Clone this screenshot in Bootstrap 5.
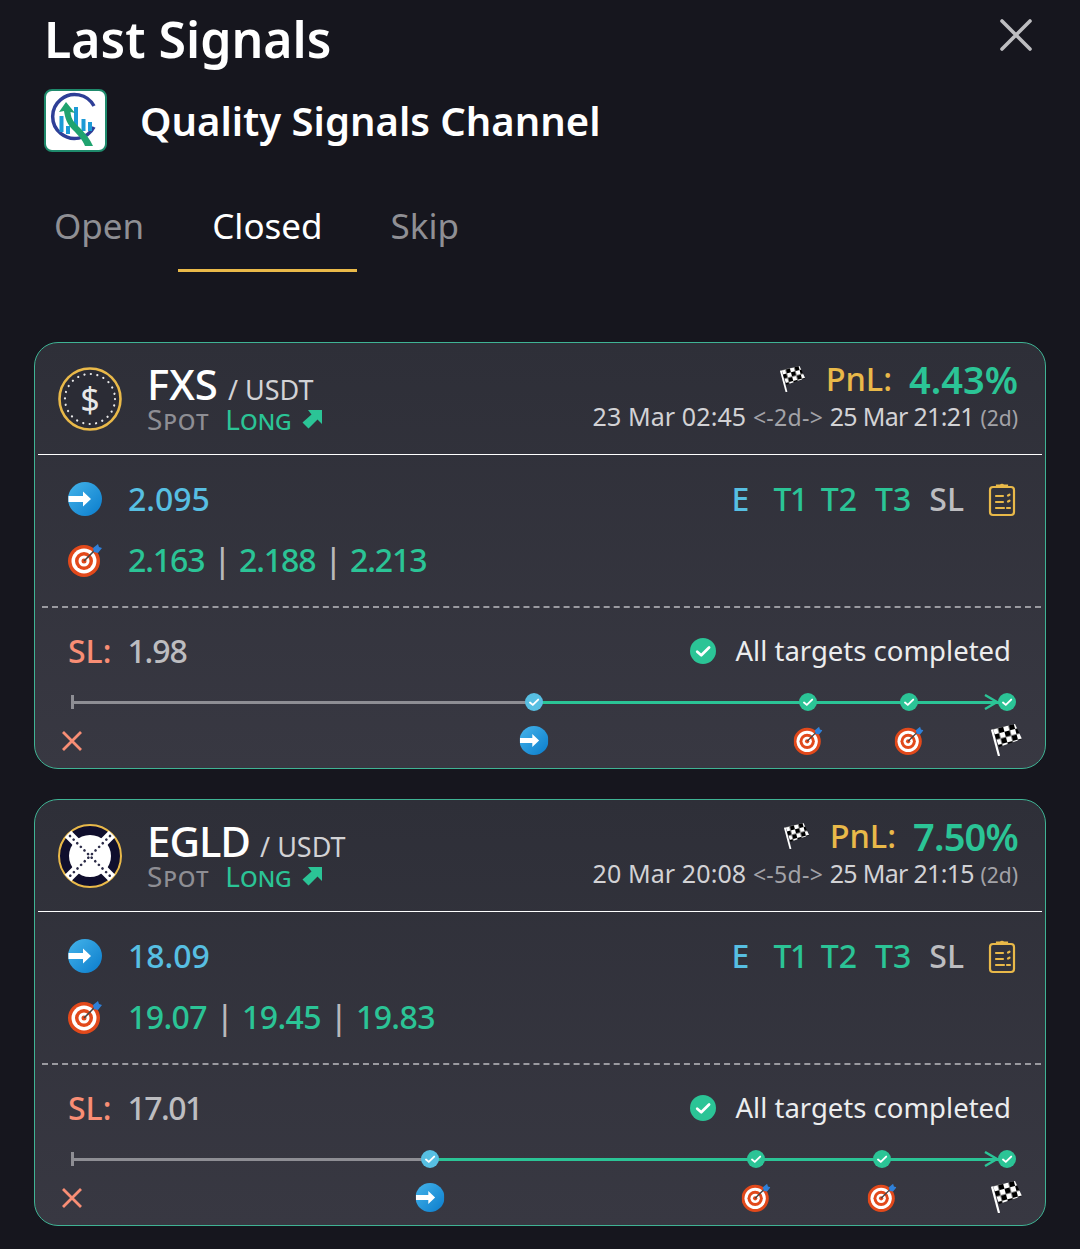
<!DOCTYPE html>
<html lang="en">
<head>
<meta charset="utf-8">
<title>Last Signals</title>
<link href="https://cdn.jsdelivr.net/npm/bootstrap@5.3.0/dist/css/bootstrap.min.css" rel="stylesheet">
<style>
html,body{height:1249px;overflow:hidden}
body{background:#16161e;font-family:"Noto Sans","Liberation Sans",sans-serif;color:#fff}
.pg-head{height:70px;padding:5px 47px 0 44px}
.pg-title{font-size:50px;font-weight:600;line-height:70px;margin:-1px 0 0;height:65px}
.close-x{width:34px;height:34px;margin-top:13px;background:none;border:0;padding:0}
.chan{height:78px;padding-left:44px;gap:33px;margin-top:11px}
.chan-name{font-size:40px;font-weight:600;margin:2px 0 0}
.logo-sq{width:63px;height:63px}
.tabs{padding-left:20px;height:183px;align-items:flex-start;padding-top:36px}
.tabs .nav-link{font-size:35px;line-height:48px;color:#8f8f94;padding:7px 34px 16px;height:77px;border-bottom:3px solid transparent;background:none}
.tabs .nav-link.active{color:#fff;border-bottom-color:#e9b949}
.sig-card{margin:0 34px 30px;height:427px;border:1px solid #3fb394;border-radius:24px;background:linear-gradient(180deg,#2e2f38 0%,#383842 100%);overflow:hidden;--bs-card-bg:transparent}
.sig-head{height:112px;flex:none;margin:0 3px;padding:0 24px 0 20px;border-bottom:1px solid #fff;gap:26px}
.coin{width:64px;height:64px;flex:none}
.coin-sign{font-size:34px;color:#e8e8e8;line-height:1}
.pair-col{margin-top:-3px;margin-left:-1px}
.pair-main{font-size:42px;font-weight:500;line-height:46px;height:44px;white-space:nowrap;gap:10px}
.pair-tight{letter-spacing:-1px}
.pair-quote{font-size:27px;font-weight:400;color:#d2d2d5}
.kind{font-size:28px;font-variant:small-caps;line-height:29px;white-space:nowrap}
.kind-spot{color:#8e8e94;letter-spacing:.8px;margin-right:16px}
.kind-up{margin-left:10px}
.col-green{color:#2bc496}
.col-blue{color:#57bfe2}
.col-gold{color:#e9b949}
.col-salmon{color:#f98e75}
.col-grey{color:#bdbdc0}
.pnl-col{margin-top:-7px}
.pnl-line{height:44px;gap:20px;white-space:nowrap}
.pnl-lab{font-size:32.500px;font-weight:500;line-height:44px}
.pnl-val{font-size:38px;font-weight:600;line-height:44px;margin-left:-3px}
.pnl-narrow{letter-spacing:-.8px}
.dates{font-size:25px;line-height:30px;color:#d2d2d5;white-space:nowrap;letter-spacing:.1px}
.date-gap{font-size:23px;color:#a3a3a8;letter-spacing:.3px}
.date-dur{font-size:21px;color:#a3a3a8;letter-spacing:0}
.date-end{letter-spacing:-.7px}
.flag-sm{width:26px;height:26px}
.sig-body{height:153px;flex:none;border-bottom:2px dashed #9a9aa0;margin:0 4px 0 7px;padding:13px 25px 0 26px}
.line-row{height:61px;gap:26px;font-size:32px;font-weight:500}
.ico-lg{width:34px;height:34px;flex:none}
.tight{letter-spacing:-1.100px}
.tight-b{letter-spacing:-.6px}
.sep{font-weight:500;color:#b8b8bb;margin:0 9px}
.tg-list{gap:18px;font-size:32px}
.tg-e{margin-right:6px}
.tg-one{letter-spacing:-1.500px;margin-right:-4px}
.clip{width:28px;height:36px;margin-left:6px}
.sl-row{height:86px;flex:none;padding:0 34px 0 33px;font-size:32px;font-weight:500}
.sl-val{color:#bdbdc0;margin-left:16px}
.tight2{letter-spacing:-1.500px}
.done{font-size:27.500px;font-weight:400;gap:20px;color:#ecedee}
.ico-done{width:26px;height:26px}
.trk{position:relative;margin:0 38px 0 37px;height:70px}
.trk-line{position:absolute;inset:1px 0 auto 0;height:14px;align-items:center}
.seg-g{height:3px;background:#8e8e94}
.seg-c{height:3px;background:#2bc496;flex:1}
.tick{position:absolute;left:-1px;top:1px;width:3px;height:14px;background:#8e8e94}
.pin{position:absolute;transform:translateX(-50%)}
.pin-top{top:-1px;width:18px;height:18px}
.pin-bot{top:32px;width:29px;height:29px}
.pin-flag{top:30px;width:32px;height:32px}
.chev{position:absolute;right:8px;top:0;width:16px;height:16px}
.x-ico{width:24px;height:24px;top:35px}
</style>
</head>
<body>
<svg width="0" height="0" class="position-absolute">
<defs>
<linearGradient id="gb" x1="0" y1="0" x2="1" y2="1"><stop offset="0" stop-color="#45b4ea"/><stop offset="1" stop-color="#0a7ccc"/></linearGradient>
<pattern id="chk" width="11" height="11" patternUnits="userSpaceOnUse" patternTransform="rotate(-15)"><rect width="11" height="11" fill="#fff"/><rect width="5.500" height="5.500" fill="#000"/><rect x="5.500" y="5.500" width="5.500" height="5.500" fill="#000"/></pattern>
<symbol id="i-arrow" viewBox="0 0 34 34"><circle cx="17" cy="17" r="17" fill="url(#gb)"/><path d="M.5 14H15V9.500L23 17l-8 7.500V20H.5z" fill="#fff"/></symbol>
<symbol id="i-target" viewBox="0 0 34 34"><circle cx="16" cy="18" r="16" fill="#e2491b"/><circle cx="16" cy="18" r="12.500" fill="#fff"/><circle cx="16" cy="18" r="9" fill="#e2491b"/><circle cx="16" cy="18" r="5.500" fill="#fff"/><circle cx="16" cy="18" r="2.500" fill="#e2491b"/><path d="M16 18L28 6" stroke="#444" stroke-width="1.600"/><path d="M25 5l5-4 1 3 3 1-4 5-4-1z" fill="#2f80d8"/></symbol>
<symbol id="i-check-g" viewBox="0 0 18 18"><circle cx="9" cy="9" r="9" fill="#2bc496"/><path d="M5 9.500l2.800 2.400L13.200 6.600" fill="none" stroke="#fff" stroke-width="1.900" stroke-linecap="round" stroke-linejoin="round"/></symbol>
<symbol id="i-check-b" viewBox="0 0 18 18"><circle cx="9" cy="9" r="9" fill="#57bfe2"/><path d="M5 9.500l2.800 2.400L13.200 6.600" fill="none" stroke="#fff" stroke-width="1.900" stroke-linecap="round" stroke-linejoin="round"/></symbol>
<symbol id="i-flag" viewBox="0 0 32 32"><path d="M1 5.500L8 32" stroke="#fff" stroke-width="2.200"/><path d="M2 5L24 0l7 15-23 8z" fill="url(#chk)"/></symbol>
<symbol id="i-clip" viewBox="0 0 28 36" fill="none" stroke="#e9b949" stroke-width="2.200" stroke-linecap="round"><rect x="2" y="6" width="24" height="28" rx="3"/><path d="M9 6V4.500h3.500a2 2 0 0 1 3 0H19V6"/><path d="M8 15h7M20 14.500l1.500-.8M8 21h7M20 20.500l1.500-.8M8 27h8M19 27h3"/></symbol>
<symbol id="i-logo" viewBox="0 0 63 63"><rect x="1" y="1" width="61" height="61" rx="7" fill="#fff" stroke="#1f8a6c" stroke-width="2"/><path d="M50 17A22 22 0 1 0 50 38" fill="none" stroke="#2e3f97" stroke-width="3.500"/><rect x="15.500" y="27" width="4" height="16" fill="#1c9ad6"/><rect x="22" y="37" width="4" height="8" fill="#1c9ad6"/><rect x="30" y="18" width="4" height="23" fill="#1c9ad6"/><rect x="37.500" y="30" width="4" height="12" fill="#1c9ad6"/><rect x="44" y="33" width="4" height="9" fill="#1c9ad6"/><path d="M22 13L31 24l-4.500-1c.5 8 4.500 11 9.500 16 5 5 10 11 13 18h-8c-3-7-7-11-12-16-6-6-8-12-9-19l-5 1z" fill="#1fa36f"/></symbol>
<symbol id="i-up" viewBox="0 0 20 20"><path d="M6 1h14v14l-4.500-4.500L6.500 19.500 .5 13.500 9.500 5.500z" fill="#2bc496"/></symbol>
<symbol id="i-egld" viewBox="0 0 64 64"><circle cx="32" cy="32" r="31" fill="#100f2d" stroke="#e9b949" stroke-width="2"/><circle cx="32" cy="32" r="21" fill="#fff"/><path d="M10 10L54 54M54 10L10 54" stroke="#fff" stroke-width="9"/><path d="M12 12L52 52M52 12L12 52" stroke="#2c2c48" stroke-width="2.600" stroke-linecap="round" stroke-dasharray="0.100 5"/></symbol>
<symbol id="i-fxs" viewBox="0 0 64 64"><circle cx="32" cy="32" r="30.500" fill="#2b2c35" stroke="#e9b949" stroke-width="2.600"/><circle cx="32" cy="32" r="25" fill="none" stroke="#e8e8e8" stroke-width="2.200" stroke-linecap="round" stroke-dasharray="0.100 6.450"/></symbol>
</defs>
</svg>

<header class="pg-head d-flex justify-content-between align-items-start">
  <h1 class="pg-title">Last Signals</h1>
  <button class="close-x" type="button" aria-label="Close"><svg width="34" height="34" viewBox="0 0 34 34"><path d="M3 3L31 31M31 3L3 31" stroke="#bdbdc0" stroke-width="3.600" stroke-linecap="round"/></svg></button>
</header>
<div class="chan d-flex align-items-center">
  <svg class="logo-sq"><use href="#i-logo"/></svg>
  <h2 class="chan-name">Quality Signals Channel</h2>
</div>
<ul class="nav tabs">
  <li class="nav-item"><a class="nav-link" href="#">Open</a></li>
  <li class="nav-item"><a class="nav-link active" href="#">Closed</a></li>
  <li class="nav-item"><a class="nav-link" href="#">Skip</a></li>
</ul>

<section class="card sig-card">
  <div class="sig-head d-flex align-items-center">
    <div class="coin position-relative">
      <svg class="coin"><use href="#i-fxs"/></svg>
      <span class="coin-sign position-absolute top-50 start-50 translate-middle">$</span>
    </div>
    <div class="pair-col flex-grow-1">
      <div class="pair-main d-flex align-items-baseline"><span>FXS</span><span class="pair-quote">/ USDT</span></div>
      <div class="kind d-flex align-items-center"><span class="kind-spot">Spot</span><span class="col-green">Long</span><svg class="kind-up" width="20" height="20"><use href="#i-up"/></svg></div>
    </div>
    <div class="pnl-col text-end">
      <div class="pnl-line d-flex align-items-center justify-content-end">
        <svg class="flag-sm"><use href="#i-flag"/></svg>
        <span class="pnl-lab col-gold">PnL:</span><span class="pnl-val col-green">4.43%</span>
      </div>
      <div class="dates">23 Mar 02:45 <span class="date-gap">&lt;-2d-&gt;</span> <span class="date-end">25 Mar 21:21</span> <span class="date-dur">(2d)</span></div>
    </div>
  </div>
  <div class="sig-body">
    <div class="line-row d-flex align-items-center">
      <svg class="ico-lg"><use href="#i-arrow"/></svg>
      <span class="col-blue flex-grow-1">2.095</span>
      <div class="tg-list d-flex align-items-center">
        <span class="col-blue tg-e">E</span><span class="col-green tg-one">T1</span><span class="col-green">T2</span><span class="col-green">T3</span><span class="col-grey">SL</span>
        <svg class="clip"><use href="#i-clip"/></svg>
      </div>
    </div>
    <div class="line-row d-flex align-items-center">
      <svg class="ico-lg"><use href="#i-target"/></svg>
      <span class="col-green tight">2.163<span class="sep">|</span>2.188<span class="sep">|</span>2.213</span>
    </div>
  </div>
  <div class="sl-row d-flex align-items-center justify-content-between">
    <span><span class="col-salmon">SL:</span><span class="sl-val tight">1.98</span></span>
    <span class="done d-flex align-items-center"><svg class="ico-done"><use href="#i-check-g"/></svg>All targets completed</span>
  </div>
  <div class="trk">
    <div class="trk-line d-flex"><div class="seg-g" style="width:49.4%"></div><div class="seg-c"></div></div>
    <div class="tick"></div>
    <svg class="chev" viewBox="0 0 16 16"><path d="M2 1l12 7-12 7" fill="none" stroke="#2bc496" stroke-width="2.400"/></svg>
    <svg class="pin pin-top" style="left:49.4%"><use href="#i-check-b"/></svg>
    <svg class="pin pin-top" style="left:78.7%"><use href="#i-check-g"/></svg>
    <svg class="pin pin-top" style="left:89.5%"><use href="#i-check-g"/></svg>
    <svg class="pin pin-top" style="left:100%"><use href="#i-check-g"/></svg>
    <svg class="pin x-ico" style="left:0" viewBox="0 0 24 24"><path d="M3 3L21 21M21 3L3 21" stroke="#f98e75" stroke-width="2.800"/></svg>
    <svg class="pin pin-bot" style="left:49.4%"><use href="#i-arrow"/></svg>
    <svg class="pin pin-bot" style="left:78.7%"><use href="#i-target"/></svg>
    <svg class="pin pin-bot" style="left:89.5%"><use href="#i-target"/></svg>
    <svg class="pin pin-flag" style="left:100%"><use href="#i-flag"/></svg>
  </div>
</section>

<section class="card sig-card">
  <div class="sig-head d-flex align-items-center">
    <svg class="coin"><use href="#i-egld"/></svg>
    <div class="pair-col flex-grow-1">
      <div class="pair-main d-flex align-items-baseline"><span class="pair-tight">EGLD</span><span class="pair-quote">/ USDT</span></div>
      <div class="kind d-flex align-items-center"><span class="kind-spot">Spot</span><span class="col-green">Long</span><svg class="kind-up" width="20" height="20"><use href="#i-up"/></svg></div>
    </div>
    <div class="pnl-col text-end">
      <div class="pnl-line d-flex align-items-center justify-content-end">
        <svg class="flag-sm"><use href="#i-flag"/></svg>
        <span class="pnl-lab col-gold">PnL:</span><span class="pnl-val pnl-narrow col-green">7.50%</span>
      </div>
      <div class="dates">20 Mar 20:08 <span class="date-gap">&lt;-5d-&gt;</span> <span class="date-end">25 Mar 21:15</span> <span class="date-dur">(2d)</span></div>
    </div>
  </div>
  <div class="sig-body">
    <div class="line-row d-flex align-items-center">
      <svg class="ico-lg"><use href="#i-arrow"/></svg>
      <span class="col-blue flex-grow-1">18.09</span>
      <div class="tg-list d-flex align-items-center">
        <span class="col-blue tg-e">E</span><span class="col-green tg-one">T1</span><span class="col-green">T2</span><span class="col-green">T3</span><span class="col-grey">SL</span>
        <svg class="clip"><use href="#i-clip"/></svg>
      </div>
    </div>
    <div class="line-row d-flex align-items-center">
      <svg class="ico-lg"><use href="#i-target"/></svg>
      <span class="col-green tight-b">19.07<span class="sep">|</span>19.45<span class="sep">|</span>19.83</span>
    </div>
  </div>
  <div class="sl-row d-flex align-items-center justify-content-between">
    <span><span class="col-salmon">SL:</span><span class="sl-val tight2">17.01</span></span>
    <span class="done d-flex align-items-center"><svg class="ico-done"><use href="#i-check-g"/></svg>All targets completed</span>
  </div>
  <div class="trk">
    <div class="trk-line d-flex"><div class="seg-g" style="width:38.3%"></div><div class="seg-c"></div></div>
    <div class="tick"></div>
    <svg class="chev" viewBox="0 0 16 16"><path d="M2 1l12 7-12 7" fill="none" stroke="#2bc496" stroke-width="2.400"/></svg>
    <svg class="pin pin-top" style="left:38.3%"><use href="#i-check-b"/></svg>
    <svg class="pin pin-top" style="left:73.2%"><use href="#i-check-g"/></svg>
    <svg class="pin pin-top" style="left:86.6%"><use href="#i-check-g"/></svg>
    <svg class="pin pin-top" style="left:100%"><use href="#i-check-g"/></svg>
    <svg class="pin x-ico" style="left:0" viewBox="0 0 24 24"><path d="M3 3L21 21M21 3L3 21" stroke="#f98e75" stroke-width="2.800"/></svg>
    <svg class="pin pin-bot" style="left:38.3%"><use href="#i-arrow"/></svg>
    <svg class="pin pin-bot" style="left:73.2%"><use href="#i-target"/></svg>
    <svg class="pin pin-bot" style="left:86.6%"><use href="#i-target"/></svg>
    <svg class="pin pin-flag" style="left:100%"><use href="#i-flag"/></svg>
  </div>
</section>
<script src="https://cdn.jsdelivr.net/npm/bootstrap@5.3.0/dist/js/bootstrap.bundle.min.js"></script>
</body>
</html>
